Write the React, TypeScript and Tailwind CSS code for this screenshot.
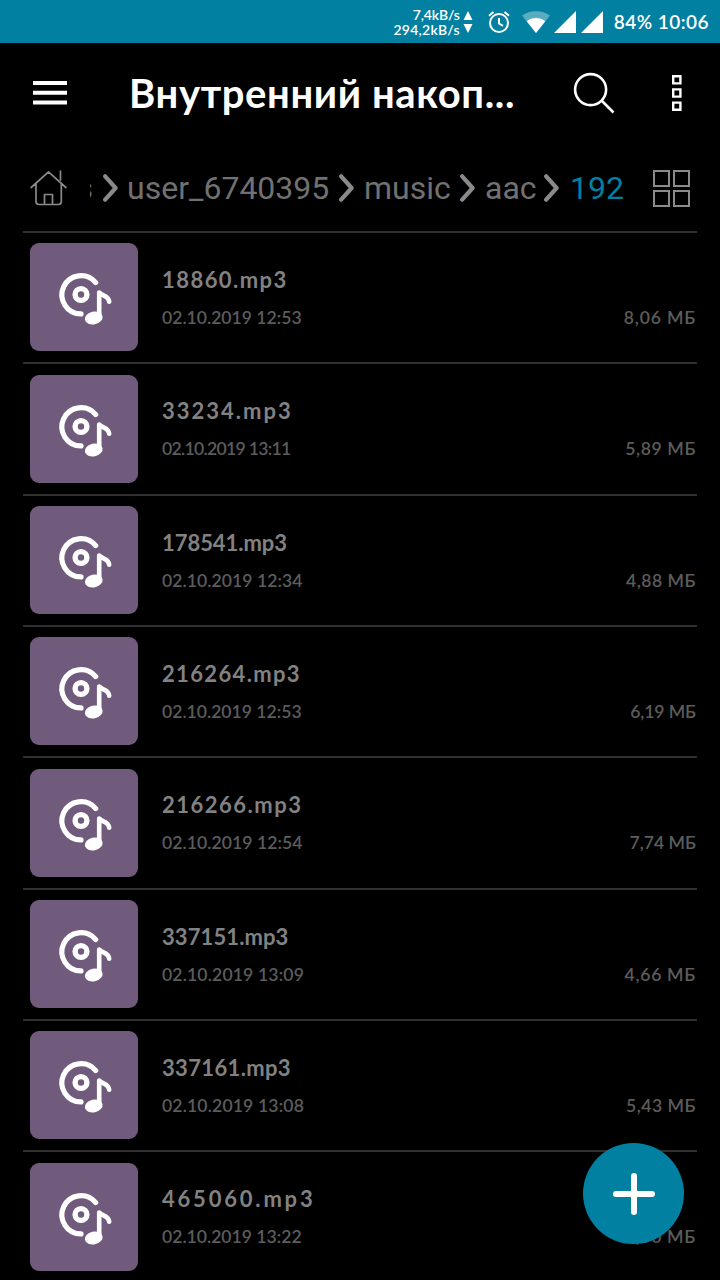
import { Fragment } from "react";

interface Track {
  name: string;
  date: string;
  size: string;
  nameClass: string;
  dateClass: string;
  sizeClass: string;
}

const tracks: Track[] = [
  { name: "18860.mp3", date: "02.10.2019 12:53", size: "8,06 МБ", nameClass: "tracking-[1.45px]", dateClass: "tracking-[0px]", sizeClass: "tracking-[0.8px]" },
  { name: "33234.mp3", date: "02.10.2019 13:11", size: "5,89 МБ", nameClass: "tracking-[2px]", dateClass: "tracking-[-0.7px]", sizeClass: "tracking-[0.6px]" },
  { name: "178541.mp3", date: "02.10.2019 12:34", size: "4,88 МБ", nameClass: "tracking-[-0.05px]", dateClass: "tracking-[0.05px]", sizeClass: "tracking-[0.5px]" },
  { name: "216264.mp3", date: "02.10.2019 12:53", size: "6,19 МБ", nameClass: "tracking-[1.35px]", dateClass: "tracking-[0px]", sizeClass: "tracking-[-0.1px]" },
  { name: "216266.mp3", date: "02.10.2019 12:54", size: "7,74 МБ", nameClass: "tracking-[1.5px]", dateClass: "tracking-[0.05px]", sizeClass: "tracking-[0px]" },
  { name: "337151.mp3", date: "02.10.2019 13:09", size: "4,66 МБ", nameClass: "tracking-[0.1px]", dateClass: "tracking-[0.15px]", sizeClass: "tracking-[0.7px]" },
  { name: "337161.mp3", date: "02.10.2019 13:08", size: "5,43 МБ", nameClass: "tracking-[0.35px]", dateClass: "tracking-[0.15px]", sizeClass: "tracking-[0.5px]" },
  { name: "465060.mp3", date: "02.10.2019 13:22", size: "5,50 МБ", nameClass: "tracking-[2.8px]", dateClass: "tracking-[0px]", sizeClass: "tracking-[0.7px]" },
];

const StatusBar = () => (
  <div className="flex h-[43px] shrink-0 items-center justify-end bg-[#0180a2] pr-[11px] text-white">
    <div className="flex flex-col items-end text-[14px] leading-[15px] font-semibold">
      <span className="tracking-[-0.1px]">7,4kB/s</span>
      <span className="tracking-[0.25px]">294,2kB/s</span>
    </div>
    <svg className="ml-[3px] h-[22px] w-[10px]" viewBox="0 0 10 22" fill="currentColor">
      <path d="M5 0 9.5 9H.5zM5 22 .5 13h9z" />
    </svg>
    <svg className="ml-[14px] h-6 w-6" viewBox="0 0 24 24" fill="none" stroke="currentColor" strokeWidth="2">
      <circle cx="12" cy="13" r="9" />
      <path d="M12 8v5.5l4 2.4M2 5.8l4.5-3.9M22 5.8l-4.5-3.9" />
    </svg>
    <svg className="ml-[11px] h-[22px] w-[28px]" viewBox="0 0 28 22" fill="currentColor">
      <path opacity=".35" d="M0 4.5C8-1.2 20-1.2 28 4.5L14 22z" />
      <path d="M4.7 10.3c5.4-4.3 13.2-4.3 18.6 0L14 22z" />
    </svg>
    <svg className="ml-[4px] h-[22px] w-[50px]" viewBox="0 0 50 22" fill="currentColor">
      <path d="M0 22 22 0v22zM27 22 49 0v22z" />
    </svg>
    <span className="ml-[10px] text-[19px] leading-6 font-semibold tracking-[0.45px] whitespace-nowrap">84% 10:06</span>
  </div>
);

const Toolbar = () => (
  <header className="flex h-[102px] shrink-0 items-center pr-[38px] pb-[2px] pl-[33px] text-white">
    <svg className="h-6 w-[34px]" viewBox="0 0 34 24" fill="currentColor">
      <path d="M0 0h34v4H0zM0 9.7h34v4H0zM0 19.4h34v4H0z" />
    </svg>
    <h1 className="ml-[62px] w-[444px] text-[40px] leading-[48px] font-bold tracking-[0.6px] whitespace-nowrap">
      Внутренний накоп...
    </h1>
    <svg className="h-[42px] w-[42px] shrink-0" viewBox="0 0 42 42" fill="none" stroke="currentColor" strokeWidth="2.6">
      <circle cx="17.6" cy="17.6" r="15.5" />
      <path d="m28.5 28.5 12 12" />
    </svg>
    <svg className="ml-auto h-[36px] w-[10px] shrink-0" viewBox="0 0 10 36" fill="none" stroke="currentColor" strokeWidth="2.4">
      <path d="M1.2 1.2h7.2v7.2H1.2zM1.2 14.4h7.2v7.2H1.2zM1.2 27.6h7.2v7.2H1.2z" />
    </svg>
  </header>
);

const Chevron = () => (
  <svg className="h-7 w-[15px] shrink-0" viewBox="0 0 15 28" fill="none" stroke="#8a8a8a" strokeWidth="4.2" strokeLinecap="round" strokeLinejoin="round">
    <path d="m2.2 2.3 10.4 11.7L2.2 25.7" />
  </svg>
);

const crumbs = [
  { label: "user_6740395", className: "ml-[9px] w-[212px] text-[#717171]" },
  { label: "music", className: "ml-[10px] w-[96px] text-[#717171]" },
  { label: "aac", className: "ml-[10px] w-[59px] text-[#717171]" },
  { label: "192", className: "ml-[11px] w-[54px] text-[#0180a2]" },
];

const Breadcrumbs = () => (
  <nav className="mx-[23px] flex h-[88px] shrink-0 items-center border-b-2 border-[#303030] pl-[7px]">
    <svg className="h-[38px] w-[38px] shrink-0" viewBox="0 0 38 38" fill="none" stroke="#8a8a8a" strokeWidth="1.7" strokeLinecap="round" strokeLinejoin="round">
      <path d="M1.2 18.5 18.5 2.8l17.4 15.7M6 15v17.5q0 3 3 3h19.3q3 0 3-3V15M30.5 2v9M14.5 35V25.5h8V35" />
    </svg>
    <div className="ml-[22px] flex h-[42px] w-[554px] items-center font-[Roboto,sans-serif] text-[32px] leading-[38px]">
      {/* parent folder scrolled out to the left */}
      <div className="flex w-[3px] shrink-0 justify-end overflow-hidden text-[#717171]">s</div>
      <span className="w-[10px] shrink-0" />
      {crumbs.map((crumb) => (
        <Fragment key={crumb.label}>
          <Chevron />
          <span className={`shrink-0 whitespace-nowrap ${crumb.className}`}>{crumb.label}</span>
        </Fragment>
      ))}
    </div>
    <svg className="ml-[9px] h-[37px] w-[37px] shrink-0" viewBox="0 0 37 37" fill="none" stroke="#8a8a8a" strokeWidth="2">
      <path d="M1 1h15v15H1zM21 1h15v15H21zM1 21h15v15H1zM21 21h15v15H21z" />
    </svg>
  </nav>
);

const MusicIcon = () => (
  <svg className="h-[54px] w-[54px] overflow-visible" viewBox="0 0 54 54" fill="none" stroke="white" strokeLinecap="round" strokeLinejoin="round">
    <path strokeWidth="5.2" d="M38.7 12.6A19.1 19.1 0 1 0 24 43.9" />
    <circle cx="24" cy="24.5" r="5.9" strokeWidth="5.4" />
    <path strokeWidth="4.6" d="M42.2 46V22.5c2.8 3.6 9.4 2.6 10 9.2" />
    <ellipse cx="36.7" cy="48" rx="9" ry="6.4" transform="rotate(-12 36.7 48)" fill="white" stroke="none" />
  </svg>
);

const TrackRow = ({ track }: { track: Track }) => (
  <li className="flex h-[131.33px] shrink-0 border-b-2 border-[#303030] pt-[10.4px] pl-[7px]">
    <div className="flex h-[108px] w-[108px] shrink-0 items-center justify-center rounded-[9px] bg-[#715b7c]">
      <MusicIcon />
    </div>
    <div className="ml-6 flex grow flex-col pt-[21.6px]">
      <span className={`text-[22px] leading-[30px] font-bold whitespace-nowrap text-[#828282] ${track.nameClass}`}>{track.name}</span>
      <div className="mt-[9px] flex justify-between pr-px text-[17.6px] leading-[28px] font-semibold whitespace-nowrap text-[#5c5c5c]">
        <span className={track.dateClass}>{track.date}</span>
        <span className={track.sizeClass}>{track.size}</span>
      </div>
    </div>
  </li>
);

export default function App() {
  return (
    <div className="relative flex h-[1280px] w-[720px] flex-col overflow-hidden bg-black font-[Lato,sans-serif]">
      <StatusBar />
      <Toolbar />
      <Breadcrumbs />
      <ul className="mx-[23px] flex flex-col">
        {tracks.map((track) => (
          <TrackRow key={track.name} track={track} />
        ))}
      </ul>
      <button aria-label="Добавить" className="absolute right-[36px] bottom-[36px] flex h-[101px] w-[101px] items-center justify-center rounded-full bg-[#0180a2]">
        <svg className="h-[42px] w-[42px]" viewBox="0 0 42 42" fill="none" stroke="white" strokeWidth="6" strokeLinecap="round">
          <path d="M21 3v36M3 21h36" />
        </svg>
      </button>
    </div>
  );
}
